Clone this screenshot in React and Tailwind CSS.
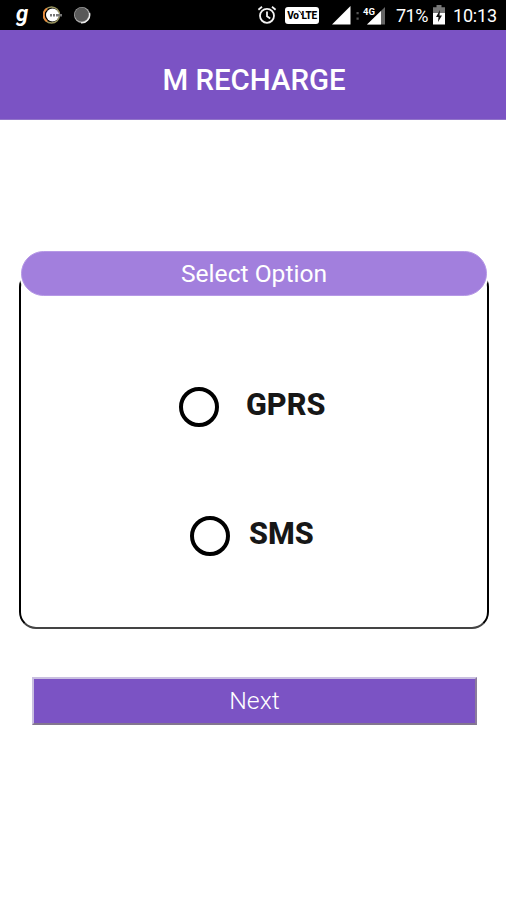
function AlarmIcon() {
  return (
    <svg className="ml-[166px] shrink-0" width="20" height="20" viewBox="0 0 20 20" fill="none" stroke="#f2f2f2" strokeWidth="1.8">
      <circle cx="10" cy="10.8" r="7" />
      <path d="M10 6.6v4.6l3.2 2.2M1.4 4.8 5 1.8M18.6 4.8 15 1.8" />
    </svg>
  );
}

function SignalIcons() {
  return (
    <svg className="ml-[13px] shrink-0" width="56" height="20" viewBox="0 0 56 20">
      <path d="M0 19.5 18.5 1v18.5z" fill="#fff" />
      <path d="M24.5 7h2.2v2.2h-2.2zM24.5 12.5h2.2v2.2h-2.2z" fill="#555" />
      <path d="M35 19.5 53 2v17.5z" fill="#666" />
      <path d="M35 19.5 49 6v13.5z" fill="#fff" />
      <text x="31" y="9.5" fill="#fff" stroke="#000" strokeWidth="1.5" paintOrder="stroke" fontFamily="Roboto, sans-serif" fontSize="9.5" fontWeight="700">
        4G
      </text>
    </svg>
  );
}

function BatteryIcon() {
  return (
    <svg className="ml-[3px] shrink-0" width="12" height="20" viewBox="0 0 12 20">
      <path d="M3.5 0h5v2.2H12v6H0v-6h3.5z" fill="#777" />
      <path d="M0 8h12v11.5H0z" fill="#fff" />
      <path d="M7 5 3 12h2.5L5 17l4-6.5H6.5z" fill="#111" />
    </svg>
  );
}

function StatusBar() {
  return (
    <div className="flex h-[30px] items-center bg-black text-white">
      <span className="ml-4 w-[13px] -translate-y-px font-[Roboto,sans-serif] text-[22px] leading-none font-bold italic">g</span>
      <svg className="ml-[14px] shrink-0" width="20" height="20" viewBox="0 0 20 20">
        <circle cx="8.5" cy="10" r="8" fill="none" stroke="#9a9560" strokeWidth="1.5" />
        <path d="M4 3.5a8 8 0 0 0 0 13" fill="none" stroke="#e58a3b" strokeWidth="2" />
        <circle cx="9.5" cy="10" r="6.5" fill="#fff" />
        <path d="M7 9h2v2.5H7zM10 9h2v2.5h-2zM13 9h6v2.5h-6z" fill="#777" />
      </svg>
      <svg className="ml-[10px] shrink-0" width="18" height="18" viewBox="0 0 18 18">
        <circle cx="9" cy="9" r="8" fill="#aaa" />
        <path d="M16.5 7A8 8 0 0 1 8 16.8" fill="none" stroke="#eee" strokeWidth="1.4" />
        <circle cx="8.7" cy="8.6" r="7" fill="#595959" />
      </svg>
      <AlarmIcon />
      <span className="ml-[8px] flex h-[17px] w-[34px] shrink-0 items-center justify-center rounded-[3px] bg-white pt-px font-[Roboto,sans-serif] text-[10px] leading-none font-extrabold tracking-[-0.3px] text-black">
        Vo
        <svg className="-mx-px -translate-y-0.5" width="5" height="8" viewBox="0 0 5 8" fill="none" stroke="#000" strokeWidth="1">
          <path d="M.5 1c2 .3 3 1.8 3 4" />
        </svg>
        LTE
      </span>
      <SignalIcons />
      <span className="ml-[8px] w-[34px] pt-0.5 font-[Roboto,sans-serif] text-[18px] leading-none tracking-[-0.5px]">71%</span>
      <BatteryIcon />
      <span className="ml-[8px] pt-0.5 font-[Roboto,sans-serif] text-[18px] leading-none tracking-[-0.2px]">10:13</span>
    </div>
  );
}

function Option({ label, className }) {
  return (
    <label className={`flex h-10 items-center text-[30.6px] leading-none font-extrabold text-[#171717] ${className}`}>
      <span className="size-10 rounded-full border-4 border-black" />
      <span className="-translate-y-0.5">{label}</span>
    </label>
  );
}

export default function App() {
  return (
    <div className="flex h-[900px] w-[506px] flex-col overflow-hidden bg-white font-[Roboto,sans-serif]">
      <StatusBar />
      <header className="flex h-[90px] items-center justify-center border-b border-[#9275c9] bg-[#7b53c4] pt-[13px] pl-[2px]">
        <h1 className="text-[29.4px] leading-none font-medium text-white">M RECHARGE</h1>
      </header>

      <main className="flex flex-col pt-[131px]">
        <div className="z-10 mr-[19px] ml-[21px] flex h-[45px] items-center justify-center rounded-full border border-[#b699e6] bg-[#a27fdd] pt-0.5 text-[24.6px] leading-none text-white ring-2 ring-white">
          Select Option
        </div>
        <section className="mr-[17px] ml-[19px] -mt-[26px] flex h-[359px] flex-col rounded-[17px] border-2 border-black border-b-[#444] pt-[115px]">
          <Option label="GPRS" className="ml-[158px] gap-[27px]" />
          <Option label="SMS" className="mt-[89px] ml-[169px] gap-[19px]" />
        </section>
        <button className="mt-[48px] mr-[29px] ml-8 h-[48px] border-2 border-t-[#c9bfe0] border-r-[#8b7b9c] border-b-[#83768f] border-l-[#c9bfe0] bg-[#7b53c4] text-[24.8px] leading-none font-light text-white">
          Next
        </button>
      </main>
    </div>
  );
}
